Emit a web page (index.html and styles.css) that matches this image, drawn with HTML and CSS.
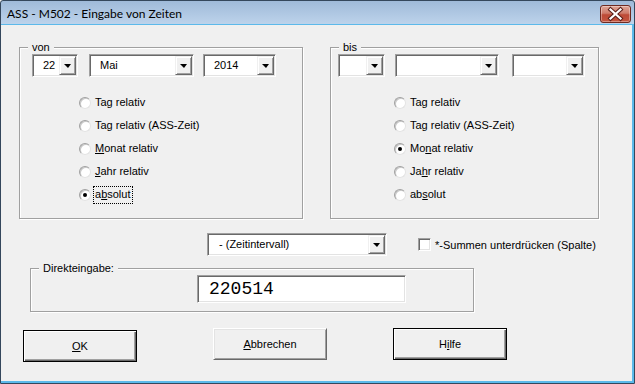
FILE: index.html
```html
<!DOCTYPE html>
<html lang="de">
<head>
    <meta charset="UTF-8">
    <title>ASS - M502 - Eingabe von Zeiten</title>
    <link rel="stylesheet" href="styles.css">
</head>
<body>
    <div class="window">
        <div class="titlebar">
            <span class="title">ASS - M502 - Eingabe von Zeiten</span>
            <button class="close-btn">
                <svg width="31" height="18" viewBox="0 0 31 18">
                    <path d="M10.5 4.5 L20.5 13.5 M20.5 4.5 L10.5 13.5" stroke="#5b2019" stroke-width="4.2" stroke-linecap="square"/>
                    <path d="M10.5 4.5 L20.5 13.5 M20.5 4.5 L10.5 13.5" stroke="#ffffff" stroke-width="2.2" stroke-linecap="square"/>
                </svg>
            </button>
        </div>

        <div class="client">
            <!-- von / bis -->
            <div class="groups">
                <div class="group group-von">
                    <div class="group-title">von</div>
                    <div class="combo-row">
                        <div class="combo w-day"><span class="combo-text">22</span><span class="combo-btn"><i class="arrow"></i></span></div>
                        <div class="combo w-month"><span class="combo-text">Mai</span><span class="combo-btn"><i class="arrow"></i></span></div>
                        <div class="combo w-year"><span class="combo-text">2014</span><span class="combo-btn"><i class="arrow"></i></span></div>
                    </div>
                    <div class="radio-list">
                        <div class="radio-item"><span class="radio"></span><span class="radio-label">Tag relativ</span></div>
                        <div class="radio-item"><span class="radio"></span><span class="radio-label">Tag relativ (ASS-Zeit)</span></div>
                        <div class="radio-item"><span class="radio"></span><span class="radio-label"><u>M</u>onat relativ</span></div>
                        <div class="radio-item"><span class="radio"></span><span class="radio-label"><u>J</u>ahr relativ</span></div>
                        <div class="radio-item"><span class="radio checked"></span><span class="radio-label focus">a<u>b</u>solut</span></div>
                    </div>
                </div>

                <div class="group group-bis">
                    <div class="group-title">bis</div>
                    <div class="combo-row">
                        <div class="combo w-day2"><span class="combo-text"></span><span class="combo-btn"><i class="arrow"></i></span></div>
                        <div class="combo w-month2"><span class="combo-text"></span><span class="combo-btn"><i class="arrow"></i></span></div>
                        <div class="combo w-year"><span class="combo-text"></span><span class="combo-btn"><i class="arrow"></i></span></div>
                    </div>
                    <div class="radio-list">
                        <div class="radio-item"><span class="radio"></span><span class="radio-label">Tag relativ</span></div>
                        <div class="radio-item"><span class="radio"></span><span class="radio-label">Tag relativ (ASS-Zeit)</span></div>
                        <div class="radio-item"><span class="radio checked"></span><span class="radio-label">Mo<u>n</u>at relativ</span></div>
                        <div class="radio-item"><span class="radio"></span><span class="radio-label">Ja<u>h</u>r relativ</span></div>
                        <div class="radio-item"><span class="radio"></span><span class="radio-label">ab<u>s</u>olut</span></div>
                    </div>
                </div>
            </div>

            <!-- Intervall + Summen -->
            <div class="options-row">
                <div class="combo w-interval"><span class="combo-text">- (Zeitintervall)</span><span class="combo-btn"><i class="arrow"></i></span></div>
                <span class="checkbox"></span>
                <span class="checkbox-label">*-Summen unterdrücken (Spalte)</span>
            </div>

            <!-- Direkteingabe -->
            <div class="group group-direct">
                <div class="group-title">Direkteingabe:</div>
                <div class="textbox">220514</div>
            </div>

            <!-- Buttons -->
            <div class="button-row">
                <button class="btn btn-default btn-ok"><u>O</u>K</button>
                <button class="btn btn-cancel"><u>A</u>bbrechen</button>
                <button class="btn btn-default btn-help">H<u>i</u>lfe</button>
            </div>
        </div>
    </div>
</body>
</html>
```

FILE: styles.css
```css
/* Page */
body {
    margin: 0;
    padding: 0;
    background-color: #f0f0f0;
    font-family: 'Liberation Sans', Arial, sans-serif;
    font-size: 11px;
    color: #000;
}

/* Window frame */
.window {
    width: 635px;
    height: 384px;
    box-sizing: border-box;
    border: 1px solid #34475c;
    border-radius: 3px 3px 0 0;
    background: linear-gradient(to bottom, #9fbad9 0, #bdd3eb 23px, #5cb9ea 23px);
    display: flex;
    flex-direction: column;
    overflow: hidden;
}

/* Title bar */
.titlebar {
    height: 24px;
    flex: none;
    display: flex;
    align-items: flex-start;
    justify-content: space-between;
}

.title {
    font-family: 'Lato', 'Liberation Sans', sans-serif;
    font-size: 12px;
    line-height: 14px;
    padding: 6px 0 0 6px;
    color: #000;
}

.close-btn {
    width: 31px;
    height: 18px;
    margin: 4px 3px 0 0;
    padding: 0;
    border: 1px solid #6f2a21;
    border-radius: 3px;
    background: linear-gradient(to bottom, #dfa597 0, #cf7c6b 45%, #bd4a36 55%, #c4553f 100%);
    box-shadow: inset 0 0 0 1px rgba(255, 255, 255, 0.35);
    display: flex;
    align-items: center;
    justify-content: center;
    box-sizing: border-box;
}

.close-btn svg {
    display: block;
    margin: -1px;
}

/* Client area */
.client {
    flex: 1;
    margin: 0 2px 2px 0;
    background-color: #f0f0f0;
    display: flex;
    flex-direction: column;
    align-items: flex-start;
}

/* Group boxes */
.groups {
    display: flex;
    margin: 22px 0 0 18px;
    gap: 27px;
}

.group {
    box-sizing: border-box;
    border: 1px solid #a0a0a0;
    box-shadow: 1px 1px 0 #fff, inset 1px 1px 0 #fff;
    padding-bottom: 12px;
}

.group-von {
    width: 284px;
}

.group-bis {
    width: 269px;
}

.group-title {
    width: fit-content;
    height: 13px;
    line-height: 13px;
    margin: -7px 0 0 8px;
    padding: 0 4px;
    background-color: #f0f0f0;
}

/* Combo boxes */
.combo-row {
    display: flex;
}

.group-von .combo-row {
    margin-left: 12px;
}

.group-von .w-day { width: 46px; }
.group-von .w-month { width: 105px; margin-left: 11px; }
.group-von .w-year { width: 73px; margin-left: 9px; }

.group-bis .combo-row {
    margin-left: 7px;
}

.group-bis .w-day2 { width: 47px; }
.group-bis .w-month2 { width: 104px; margin-left: 10px; }
.group-bis .w-year { width: 73px; margin-left: 13px; }

.combo {
    box-sizing: border-box;
    height: 23px;
    display: flex;
    background-color: #fff;
    border: 1px solid;
    border-color: #a0a0a0 #fff #fff #a0a0a0;
    padding: 1px;
    box-shadow: inset 1px 1px 0 #696969, inset -1px -1px 0 #e3e3e3;
}

.combo-text {
    flex: 1;
    line-height: 19px;
    padding-left: 9px;
    white-space: nowrap;
    overflow: hidden;
}

.combo-btn {
    width: 17px;
    box-sizing: border-box;
    background-color: #f0f0f0;
    border: 1px solid;
    border-color: #f0f0f0 #696969 #696969 #f0f0f0;
    box-shadow: inset 1px 1px 0 #fff, inset -1px -1px 0 #a0a0a0;
    display: flex;
    align-items: center;
    justify-content: center;
}

.arrow {
    display: block;
    width: 0;
    height: 0;
    border-top: 4px solid #000;
    border-left: 4px solid transparent;
    border-right: 3px solid transparent;
    margin-top: 1px;
}

/* Radio buttons */
.radio-list {
    margin-top: 14px;
}

.radio-item {
    height: 23px;
    display: flex;
    align-items: center;
}

.group-von .radio {
    margin-left: 59px;
}

.group-bis .radio {
    margin-left: 63px;
}

.radio {
    width: 12px;
    height: 12px;
    box-sizing: border-box;
    border-radius: 50%;
    background-color: #fff;
    border: 1px solid;
    border-color: #a0a0a0 #e3e3e3 #e3e3e3 #a0a0a0;
    box-shadow: inset 1px 1px 0 #c8c8c8;
    display: flex;
    align-items: center;
    justify-content: center;
}

.radio.checked::after {
    content: "";
    width: 4px;
    height: 4px;
    border-radius: 50%;
    background-color: #000;
}

.radio-label {
    margin-left: 2px;
    padding: 1px 1px 2px;
    line-height: 13px;
    border: 1px dotted transparent;
    white-space: nowrap;
}

.radio-label.focus {
    border-color: #000;
}

/* Interval row */
.options-row {
    display: flex;
    align-items: center;
    margin: 14px 0 0 206px;
}

.w-interval {
    width: 180px;
}

.w-interval .combo-text {
    padding-left: 10px;
}

.checkbox {
    width: 13px;
    height: 13px;
    box-sizing: border-box;
    margin-left: 31px;
    background-color: #fff;
    border: 1px solid;
    border-color: #a0a0a0 #fff #fff #a0a0a0;
    box-shadow: inset 1px 1px 0 #696969, inset -1px -1px 0 #e3e3e3;
}

.checkbox-label {
    margin-left: 4px;
    white-space: nowrap;
}

/* Direkteingabe */
.group-direct {
    width: 444px;
    margin: 12px 0 0 29px;
    padding-bottom: 8px;
}

.textbox {
    box-sizing: border-box;
    width: 209px;
    height: 28px;
    margin-left: 166px;
    padding-left: 11px;
    background-color: #fff;
    border: 1px solid;
    border-color: #a0a0a0 #fff #fff #a0a0a0;
    box-shadow: inset 1px 1px 0 #696969, inset -1px -1px 0 #e3e3e3;
    font-family: 'Liberation Mono', 'Courier New', monospace;
    font-size: 18px;
    line-height: 26px;
}

/* Buttons */
.button-row {
    display: flex;
    align-items: flex-start;
    margin: 16px 0 0 22px;
}

.btn {
    width: 114px;
    height: 32px;
    box-sizing: border-box;
    padding: 0;
    font-family: 'Liberation Sans', Arial, sans-serif;
    font-size: 11px;
    color: #000;
    background-color: #f0f0f0;
    border: 1px solid;
    border-color: #fff #696969 #696969 #fff;
    box-shadow: inset 1px 1px 0 #e3e3e3, inset -1px -1px 0 #a0a0a0;
}

.btn-default {
    border: 1px solid #000;
    box-shadow: inset 1px 1px 0 #fff, inset -1px -1px 0 #696969, inset -2px -2px 0 #a0a0a0;
}

.btn-ok {
    margin-top: 2px;
}

.btn-cancel {
    margin-left: 76px;
}

.btn-help {
    margin-left: 66px;
}
```
